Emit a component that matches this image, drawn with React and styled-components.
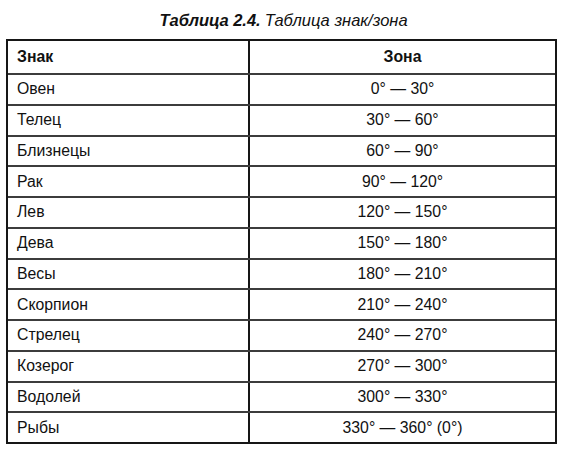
import React from "react";
import styled, { createGlobalStyle } from "styled-components";

const GlobalStyle = createGlobalStyle`
  html, body {
    margin: 0;
    padding: 0;
    background: #ffffff;
  }
  body {
    font-family: "Liberation Sans", Arial, sans-serif;
    color: #111111;
  }
`;

const Page = styled.div`
  width: 567px;
  height: 450px;
  padding-left: 6px;
  box-sizing: border-box;
`;

const Caption = styled.div`
  height: 39px;
  display: flex;
  align-items: center;
  justify-content: center;
  margin-left: -6px;
  padding-top: 1px;
  box-sizing: border-box;
  font-size: 16.5px;
  font-style: italic;
  color: #111;

  b {
    font-weight: bold;
    margin-right: 4px;
  }
`;

const Table = styled.div`
  width: 551px;
  border: 2px solid #161616;
  box-sizing: border-box;
`;

const Row = styled.div`
  display: grid;
  grid-template-columns: 240px 1fr;
  height: ${(p) => (p.$head ? "32px" : "30.75px")};
  border-top: ${(p) => (p.$head ? "none" : "2px solid #3c3c3c")};
  box-sizing: border-box;
  font-size: 15.8px;
  font-weight: ${(p) => (p.$head ? "bold" : "normal")};
`;

const Cell = styled.div`
  display: flex;
  align-items: center;
  justify-content: ${(p) => (p.$center ? "center" : "flex-start")};
  padding-left: ${(p) => (p.$center ? "0" : "9px")};
  border-left: ${(p) => (p.$center ? "2px solid #161616" : "none")};
  white-space: nowrap;
`;

const rows = [
  ["Овен", "0° — 30°"],
  ["Телец", "30° — 60°"],
  ["Близнецы", "60° — 90°"],
  ["Рак", "90° — 120°"],
  ["Лев", "120° — 150°"],
  ["Дева", "150° — 180°"],
  ["Весы", "180° — 210°"],
  ["Скорпион", "210° — 240°"],
  ["Стрелец", "240° — 270°"],
  ["Козерог", "270° — 300°"],
  ["Водолей", "300° — 330°"],
  ["Рыбы", "330° — 360° (0°)"],
];

const App = () => {
  return (
    <Page>
      <GlobalStyle />
      <Caption>
        <b>Таблица 2.4.</b> Таблица знак/зона
      </Caption>
      <Table>
        <Row $head>
          <Cell>Знак</Cell>
          <Cell $center>Зона</Cell>
        </Row>
        {rows.map(([sign, zone]) => (
          <Row key={sign}>
            <Cell>{sign}</Cell>
            <Cell $center>{zone}</Cell>
          </Row>
        ))}
      </Table>
    </Page>
  );
};

export default App;
